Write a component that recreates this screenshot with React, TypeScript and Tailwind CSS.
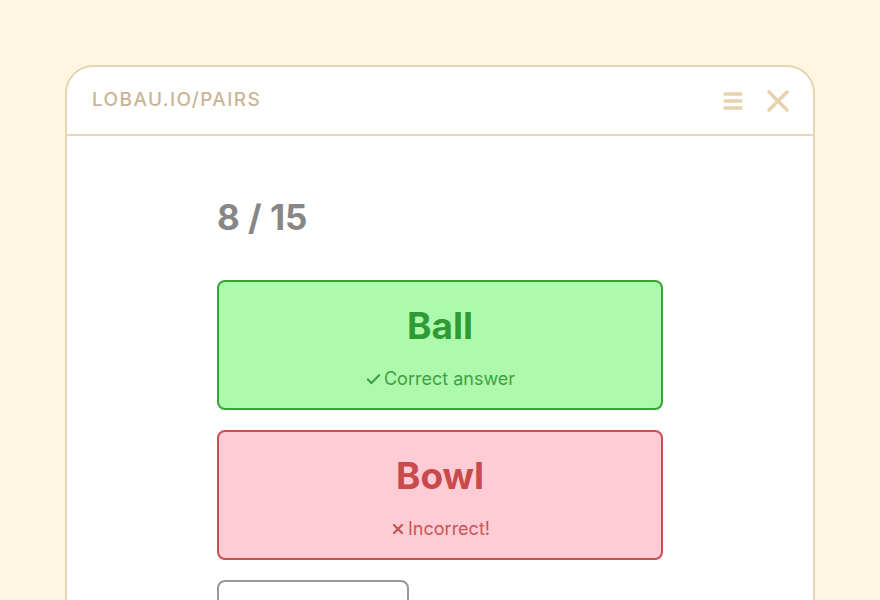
import { Check, X } from "lucide-react";

function Card({
    word,
    ok,
}: {
    word: string;
    ok: boolean;
}) {
    return (
        <div
            className={`flex h-[130px] flex-col items-center rounded-lg border-2 pt-[20px] ${
                ok
                    ? "border-[#36a336] bg-[#adfaad] text-[#2f9a35]"
                    : "border-[#c9504f] bg-[#ffccd5] text-[#c94a4a]"
            }`}
        >
            <p className="text-[37px] font-bold leading-[48px]">{word}</p>
            <p
                className={`mt-[17px] flex items-center gap-[2px] text-[18px] leading-[24px] ${
                    ok ? "text-[#3f9f43]" : "text-[#c65656]"
                }`}
            >
                {ok ? (
                    <Check size={17} strokeWidth={3} />
                ) : (
                    <X size={16} strokeWidth={3.5} />
                )}
                {ok ? "Correct answer" : "Incorrect!"}
            </p>
        </div>
    );
}

function App() {
    return (
        <div
            className="h-[600px] overflow-hidden bg-[#fef6e0] px-[65px] pt-[65px]"
            style={{ fontFamily: "Inter, 'Open Sans', sans-serif" }}
        >
            <div className="h-[600px] rounded-t-[28px] border-2 border-b-0 border-[#e8d5b3] bg-white">
                <div className="flex h-[69px] items-center justify-between border-b-2 border-[#e8d5b3] pl-[25px] pr-[23px]">
                    <span className="text-[19px] font-medium tracking-[1.4px] text-[#c9b596]">
                        LOBAU.IO/PAIRS
                    </span>
                    <div className="flex items-center gap-[22px] text-[#e6d2ae]">
                        <svg width="22" height="22" viewBox="0 0 22 22">
                            <g stroke="currentColor" strokeWidth="3.4" strokeLinecap="round">
                                <line x1="3" y1="4" x2="19" y2="4" />
                                <line x1="3" y1="11" x2="19" y2="11" />
                                <line x1="3" y1="18" x2="19" y2="18" />
                            </g>
                        </svg>
                        <svg width="24" height="24" viewBox="0 0 24 24">
                            <g stroke="currentColor" strokeWidth="3.6" strokeLinecap="round">
                                <line x1="3" y1="3" x2="21" y2="21" />
                                <line x1="21" y1="3" x2="3" y2="21" />
                            </g>
                        </svg>
                    </div>
                </div>

                <div className="mx-auto w-[446px] pt-[60px]">
                    <p className="text-[35px] font-bold leading-[42px] text-[#878787]">
                        8 / 15
                    </p>
                    <div className="mt-[42px] flex flex-col gap-[20px]">
                        <Card word="Ball" ok />
                        <Card word="Bowl" ok={false} />
                        <div className="h-[60px] w-[192px] rounded-lg border-2 border-[#999999] bg-white" />
                    </div>
                </div>
            </div>
        </div>
    );
}

export default App;
